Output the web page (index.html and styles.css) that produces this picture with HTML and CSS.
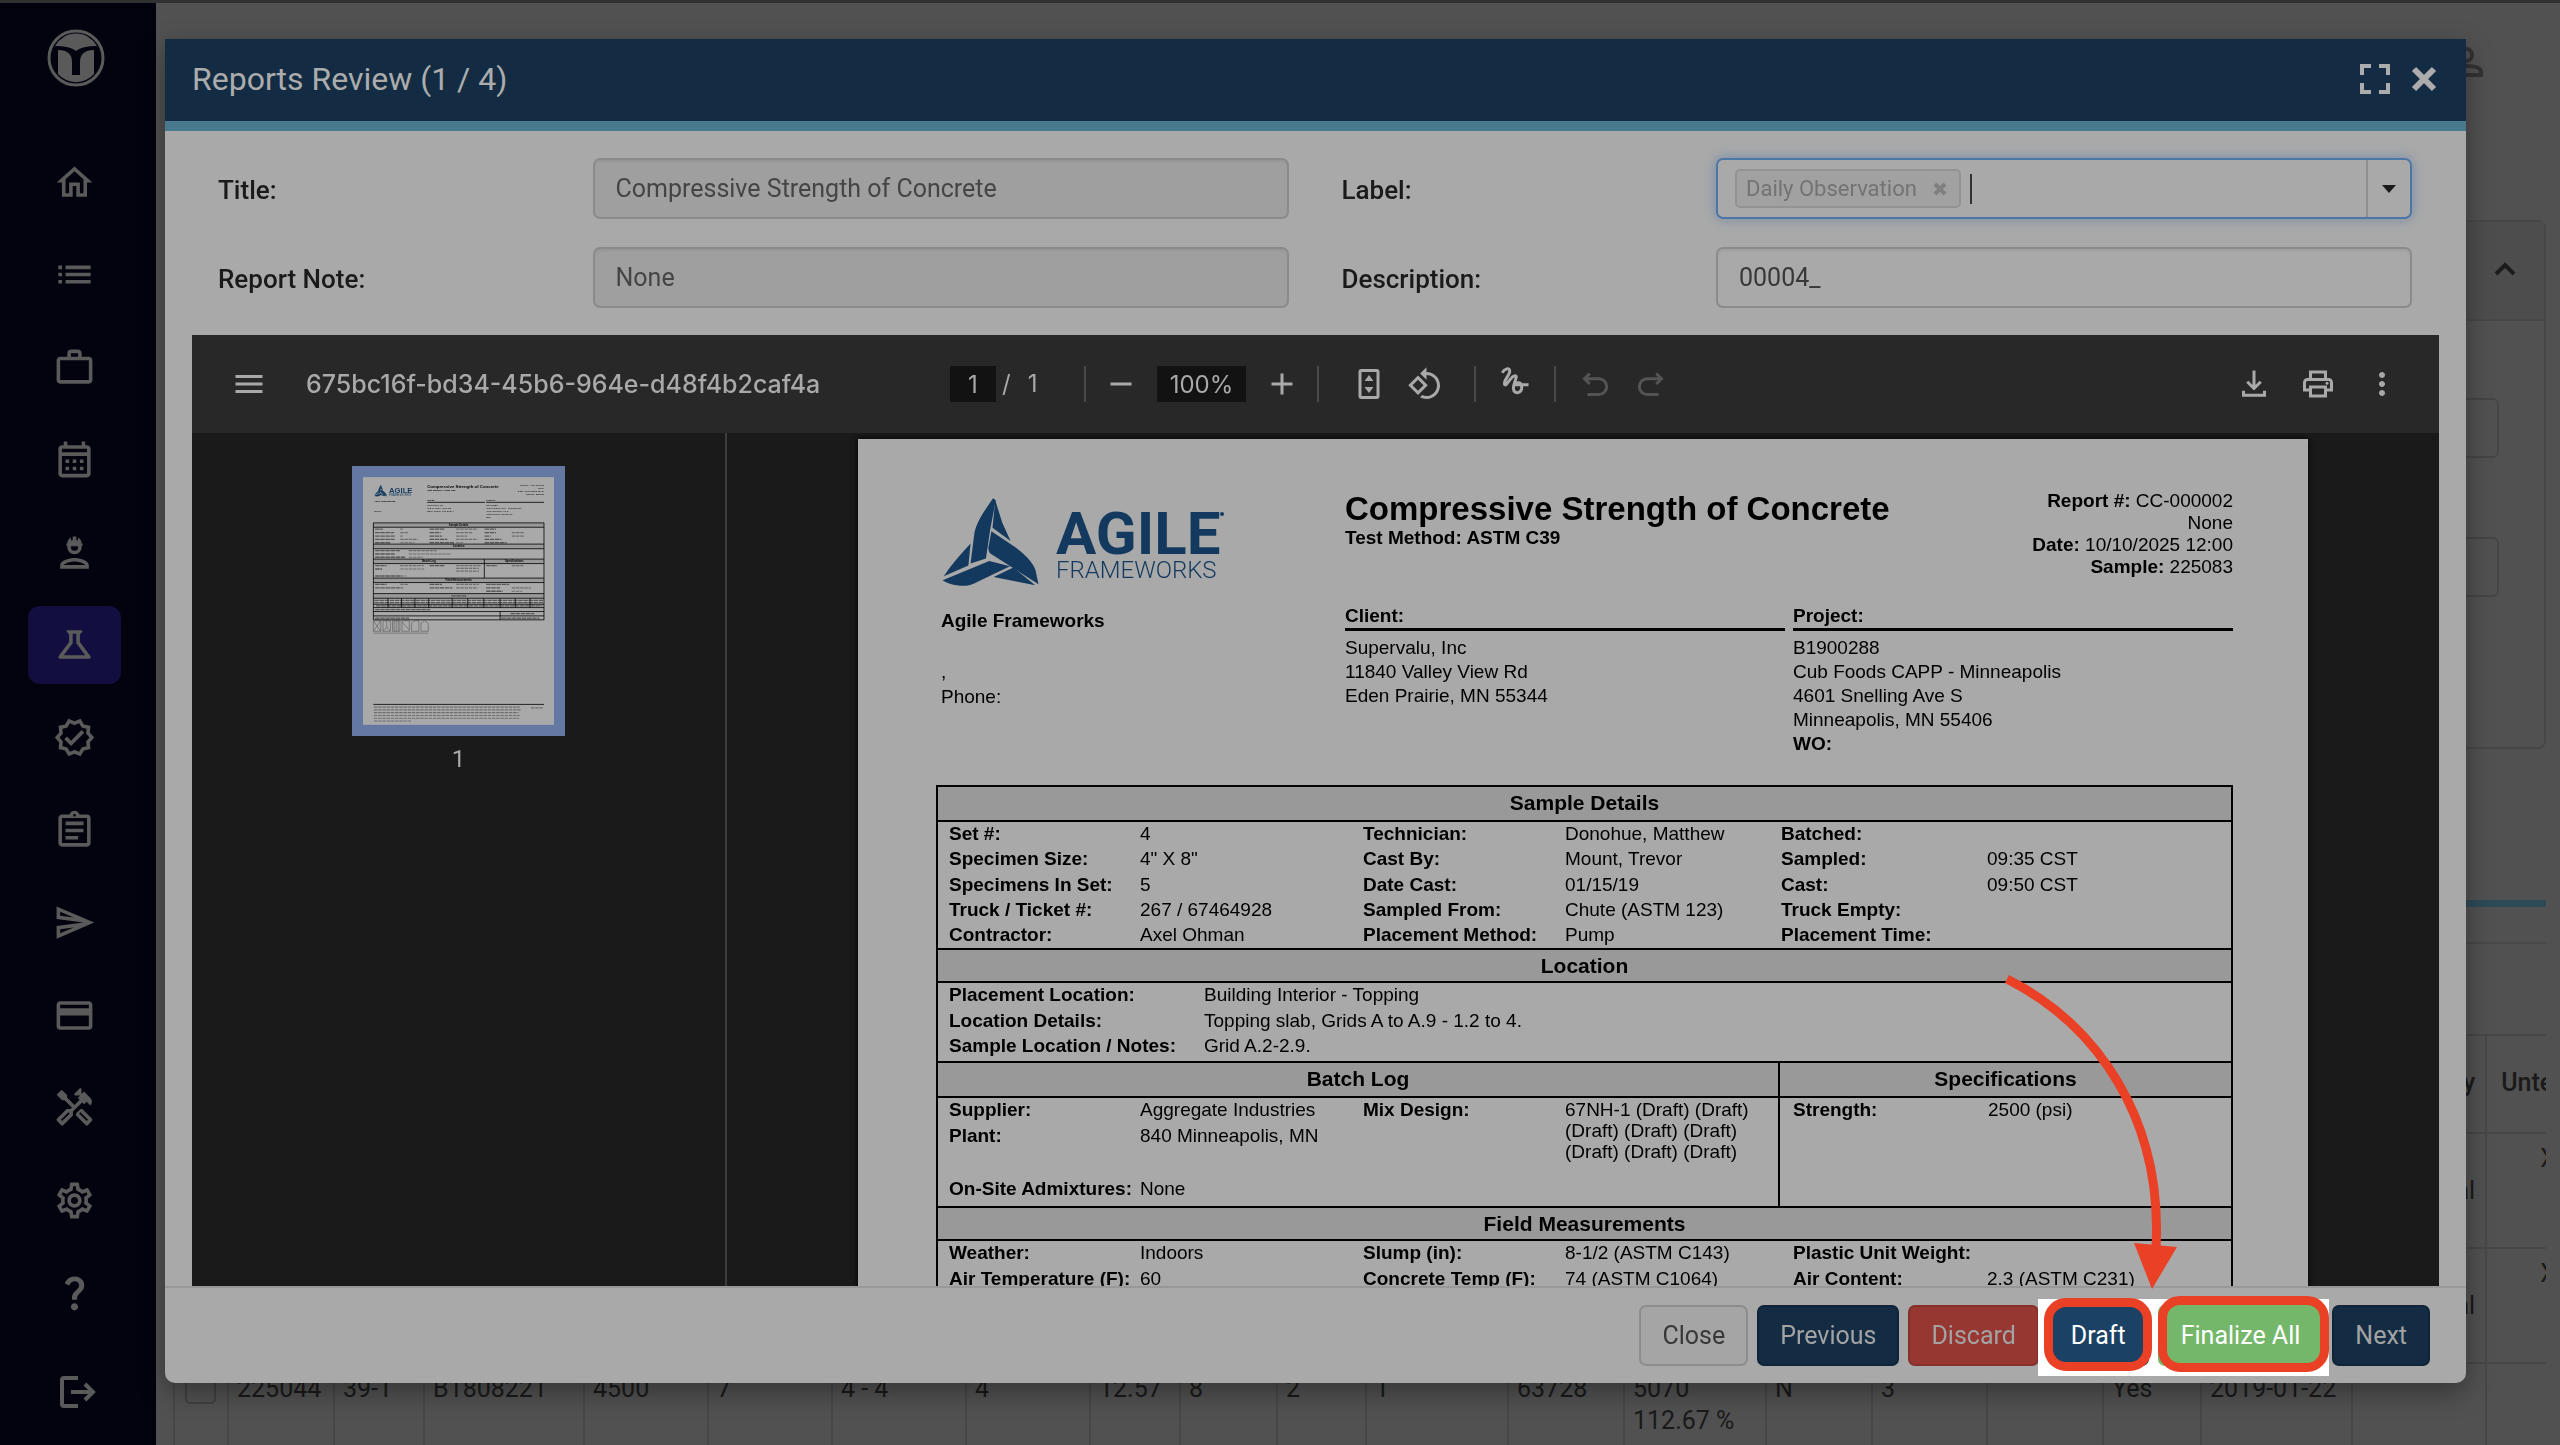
FILE: index.html
```html
<!DOCTYPE html>
<html lang="en">
<head>
<meta charset="utf-8">
<title>Reports Review</title>
<link rel="stylesheet" href="styles.css">
</head>
<body>
<svg class="defs" aria-hidden="true">
  <symbol id="agile-mark" viewBox="0 0 98 90">
    <g transform="scale(0.548 0.333)">
      <path d="M95 4C78 45 62 80 60 120L54 200L82 185L90 95L100 10Z"/>
      <path d="M99 10L112 78L127 132L94 92Z"/>
      <path d="M92 103L135 150Q172 195 174 232L178 262L90 170Q84 160 88 140Z"/>
      <path d="M3 250L88 192L126 208L66 255Q50 270 32 266Q12 262 3 250Z"/>
      <path d="M54 140L50 206L5 238Q20 200 54 140Z"/>
      <path d="M132 212L172 265L96 240Z"/>
    </g>
  </symbol>
</svg>

<div class="app">
  <nav class="sidebar" aria-label="Main">
    <a class="brand" href="#" aria-label="Home page">
      <svg viewBox="0 0 58 58"><circle cx="29" cy="29" r="27" fill="none" stroke="currentColor" stroke-width="3"/><path d="M8 17A24 24 0 0 1 50 17Q35 17 29 22Q23 17 8 17Z"/><path d="M11 21Q25 21 25 33V46H33V33Q33 21 47 21V45A24 24 0 0 1 11 45Z"/></svg>
    </a>
    <div class="nav-items">
      <a href="#" aria-label="Home"><svg viewBox="0 0 24 24"><path d="M12 5.69l5 4.5V18h-2v-6H9v6H7v-7.81l5-4.5M12 3L2 12h3v8h6v-6h2v6h6v-8h3L12 3z"/></svg></a>
      <a href="#" aria-label="List"><svg viewBox="0 0 24 24"><path d="M3 13h2v-2H3v2zm0 4h2v-2H3v2zm0-8h2V7H3v2zm4 4h14v-2H7v2zm0 4h14v-2H7v2zM7 7v2h14V7H7z"/></svg></a>
      <a href="#" aria-label="Projects"><svg viewBox="0 0 24 24"><path d="M14 6V4h-4v2h4zM4 8v11h16V8H4zm16-2c1.11 0 2 .89 2 2v11c0 1.11-.89 2-2 2H4c-1.11 0-2-.89-2-2l.01-11c0-1.11.88-2 1.99-2h4V4c0-1.11.89-2 2-2h4c1.11 0 2 .89 2 2v2h4z"/></svg></a>
      <a href="#" aria-label="Calendar"><svg viewBox="0 0 24 24"><path d="M19 4h-1V2h-2v2H8V2H6v2H5c-1.11 0-1.99.9-1.99 2L3 20c0 1.1.89 2 2 2h14c1.1 0 2-.9 2-2V6c0-1.1-.9-2-2-2zm0 16H5V10h14v10zm0-12H5V6h14v2zM9 14H7v-2h2v2zm4 0h-2v-2h2v2zm4 0h-2v-2h2v2zm-8 4H7v-2h2v2zm4 0h-2v-2h2v2zm4 0h-2v-2h2v2z"/></svg></a>
      <a href="#" aria-label="Crew"><svg viewBox="0 0 24 24"><path d="M12 15c-2.67 0-8 1.34-8 4v2h16v-2c0-2.66-5.33-4-8-4zm-6 4c.2-.7 3.3-2 6-2s5.800 1.300 6 2H6z"/><path d="M7.500 7H8c0-1.500.8-2.700 2-3.400V5.200h1V3h2v2.200h1V3.600c1.200.7 2 1.900 2 3.400h.5v1.200H16v.8a4 4 0 0 1-8 0v-.8h-.5zM10 8.500v.5a2 2 0 0 0 4 0v-.5z" fill-rule="evenodd"/></svg></a>
      <a href="#" class="active" aria-label="Lab"><svg viewBox="0 0 24 24"><path d="M13 11.330L18 18H6l5-6.670V6h2m2.960-2H8.040c-.42 0-.65.48-.39.81L9 6.500v4.170L3.200 18.400c-.49.66-.02 1.600.8 1.600h16c.82 0 1.290-.94.8-1.600L15 10.670V6.500l1.350-1.690c.26-.33.03-.81-.39-.81z"/></svg></a>
      <a href="#" aria-label="Verified"><svg viewBox="0 0 24 24"><path d="M23 11.990l-2.440-2.790.34-3.690-3.610-.82L15.400 1.500 12 2.960 8.600 1.500 6.710 4.690 3.100 5.500l.34 3.700L1 11.990l2.440 2.790-.34 3.700 3.610.82 1.890 3.200 3.400-1.470 3.400 1.460 1.890-3.190 3.610-.82-.34-3.690L23 11.990zm-3.950 1.480l-.56.65.08.85.18 1.950-1.900.43-.84.19-.44.74-.99 1.680-1.780-.77-.8-.34-.79.34-1.780.77-.99-1.670-.44-.74-.84-.19-1.900-.43.18-1.960.08-.85-.56-.65L3.670 12l1.290-1.480.56-.65-.09-.86-.18-1.940 1.900-.43.84-.19.44-.74.99-1.680 1.780.77.8.34.79-.34 1.780-.77.99 1.680.44.74.84.19 1.900.43-.18 1.950-.08.85.56.65 1.290 1.470-1.280 1.480z"/><path d="M10.090 13.750l-2.320-2.330-1.480 1.490 3.800 3.810 7.340-7.360-1.480-1.490z"/></svg></a>
      <a href="#" aria-label="Reports"><svg viewBox="0 0 24 24"><path d="M7 15h7v2H7zm0-4h10v2H7zm0-4h10v2H7zm12-4h-4.180C14.400 1.840 13.300 1 12 1c-1.300 0-2.400.84-2.820 2H5c-1.100 0-2 .9-2 2v14c0 1.100.9 2 2 2h14c1.100 0 2-.9 2-2V5c0-1.100-.9-2-2-2zm-7-.25c.41 0 .75.34.75.75s-.34.75-.75.75-.75-.34-.75-.75.34-.75.75-.75zM19 19H5V5h14v14z"/></svg></a>
      <a href="#" aria-label="Send"><svg viewBox="0 0 24 24"><path d="M4.010 6.030l7.510 3.220-7.520-1 .01-2.220m7.500 8.720L4 17.970v-2.220l7.510-1M2.010 3L2 10l15 2-15 2 .01 7L23 12 2.010 3z"/></svg></a>
      <a href="#" aria-label="Billing"><svg viewBox="0 0 24 24"><path d="M20 4H4c-1.110 0-1.990.89-1.990 2L2 18c0 1.110.89 2 2 2h16c1.110 0 2-.89 2-2V6c0-1.110-.89-2-2-2zm0 14H4v-6h16v6zm0-10H4V6h16v2z"/></svg></a>
      <a href="#" aria-label="Tools"><svg viewBox="0 0 24 24"><path d="M21.670 18.170l-5.300-5.300h-.99l-2.540 2.540v.99l5.300 5.300c.39.39 1.020.39 1.410 0l2.120-2.120c.39-.38.39-1.020 0-1.410zm-2.830 1.420l-4.240-4.240.71-.71 4.240 4.240-.71.71z"/><path d="M17.340 10.190l1.410-1.410 2.120 2.120c1.170-1.170 1.170-3.070 0-4.240l-3.540-3.540-1.410 1.410V1.710L15.220 1l-3.540 3.540.71.71h2.830l-1.410 1.410 1.060 1.060-2.890 2.890-4.130-4.130V5.060L4.830 2.040 2 4.870 5.030 7.900h1.410l4.130 4.130-.85.85H7.600l-5.300 5.300c-.39.39-.39 1.020 0 1.410l2.120 2.120c.39.39 1.020.39 1.410 0l5.300-5.300v-2.120l5.150-5.150 1.060 1.050zm-7.980 5.150l-4.240 4.240-.71-.71 4.240-4.240.71.71z"/></svg></a>
      <a href="#" aria-label="Settings"><svg viewBox="0 0 24 24"><path d="M19.430 12.980c.04-.32.07-.64.07-.98 0-.34-.03-.66-.07-.98l2.110-1.650c.19-.15.24-.42.12-.64l-2-3.460c-.09-.16-.26-.25-.44-.25-.06 0-.12.01-.17.03l-2.490 1c-.52-.4-1.080-.73-1.690-.98l-.38-2.650C14.460 2.180 14.250 2 14 2h-4c-.25 0-.46.18-.49.42l-.38 2.650c-.61.25-1.170.59-1.690.98l-2.490-1c-.06-.02-.12-.03-.18-.03-.17 0-.34.09-.43.25l-2 3.460c-.13.22-.07.49.12.64l2.110 1.650c-.04.32-.07.65-.07.98 0 .33.03.66.07.98l-2.110 1.650c-.19.15-.24.42-.12.64l2 3.460c.09.16.26.25.44.25.06 0 .12-.01.17-.03l2.490-1c.52.4 1.080.73 1.690.98l.38 2.650c.03.24.24.42.49.42h4c.25 0 .46-.18.49-.42l.38-2.650c.61-.25 1.170-.59 1.690-.98l2.490 1c.06.02.12.03.18.03.17 0 .34-.09.43-.25l2-3.460c.12-.22.07-.49-.12-.64l-2.110-1.650zm-1.980-1.710c.04.31.05.52.05.73 0 .21-.02.43-.05.73l-.14 1.130.89.7 1.080.84-.7 1.210-1.270-.51-1.040-.42-.9.68c-.43.32-.84.56-1.250.73l-1.060.43-.16 1.130-.2 1.350h-1.400l-.19-1.350-.16-1.130-1.060-.43c-.43-.18-.83-.41-1.230-.71l-.91-.7-1.060.43-1.270.51-.7-1.210 1.080-.84.89-.7-.14-1.130c-.03-.31-.05-.54-.05-.74s.02-.43.05-.73l.14-1.130-.89-.7-1.080-.84.7-1.210 1.270.51 1.040.42.9-.68c.43-.32.84-.56 1.250-.73l1.060-.43.16-1.130.2-1.350h1.390l.19 1.350.16 1.130 1.060.43c.43.18.83.41 1.230.71l.91.7 1.060-.43 1.270-.51.7 1.210-1.070.85-.89.7.14 1.130zM12 8c-2.210 0-4 1.790-4 4s1.790 4 4 4 4-1.790 4-4-1.790-4-4-4zm0 6c-1.100 0-2-.9-2-2s.9-2 2-2 2 .9 2 2-.9 2-2 2z"/></svg></a>
      <a href="#" aria-label="Help"><svg viewBox="0 0 24 24"><path d="M11.070 12.850c.77-1.390 2.250-2.210 3.110-3.440.91-1.290.4-3.700-2.180-3.700-1.690 0-2.520 1.280-2.870 2.340L6.540 6.960C7.250 4.830 9.180 3 11.990 3c2.350 0 3.960 1.070 4.780 2.410.7 1.150 1.110 3.300.03 4.900-1.200 1.770-2.350 2.310-2.970 3.450-.25.46-.35.76-.35 2.240h-2.890c-.01-.78-.13-2.050.48-3.150zM14 20c0 1.100-.9 2-2 2s-2-.9-2-2 .9-2 2-2 2 .9 2 2z"/></svg></a>
    </div>
    <a class="logout" href="#" aria-label="Log out"><svg viewBox="0 0 36 32" fill="none" stroke="currentColor" stroke-width="4"><path d="M18 2H4Q2 2 2 4V28Q2 30 4 30H18M11 16H33M25 8L33 16L25 24"/></svg></a>
  </nav>

  <main class="page">
    <header class="page-head">
      <a href="#" aria-label="Account"><svg viewBox="0 0 34 30" fill="none" stroke="currentColor" stroke-width="4"><circle cx="17" cy="8" r="6"/><path d="M2 28V25Q2 19 17 19T32 25V28Z"/></svg></a>
    </header>
    <section class="filter-card">
      <div class="filter-head"><button type="button" aria-label="Collapse"><svg viewBox="0 0 22 14" fill="none" stroke="currentColor" stroke-width="4"><path d="M2 12L11 3L20 12"/></svg></button></div>
      <div class="filter-body">
        <input type="text" aria-label="Filter from">
        <input type="text" aria-label="Filter to">
      </div>
    </section>
    <section class="results">
      <div class="results-bar"></div>
      <table>
        <colgroup><col class="c54"><col class="c106"><col class="c90"><col class="c160"><col class="c124"><col class="c124"><col class="c134"><col class="c124"><col class="c90"><col class="c97"><col class="c89"><col class="c142"><col class="c116"><col class="c142"><col class="c106"><col class="c115"><col class="c116"><col class="c98"><col class="c151"><col class="c134"><col class="c124"></colgroup>
        <thead><tr><th colspan="19"></th><th class="end">y</th><th class="untested">Unte</th></tr></thead>
        <tbody>
          <tr><td colspan="19"></td><td class="end"><br>al</td><td class="count">X</td></tr>
          <tr><td colspan="19"></td><td class="end"><br>al</td><td class="count">X</td></tr>
          <tr><td class="tick"><input type="checkbox" aria-label="Select 225044"></td><td>225044</td><td>39-1</td><td>B1808221</td><td>4500</td><td>7</td><td>4 - 4</td><td>4</td><td>12.57</td><td>8</td><td>2</td><td>1</td><td>63728</td><td>5070<br>112.67 %</td><td>N</td><td>3</td><td></td><td>Yes</td><td>2019-01-22</td><td></td><td></td></tr>
        </tbody>
      </table>
    </section>
  </main>
</div>

<div class="overlay">
  <section class="modal" role="dialog" aria-labelledby="modal-title">
    <header class="modal-head">
      <h1 id="modal-title">Reports Review (1 / 4)</h1>
      <button type="button" aria-label="Full screen"><svg width="30" height="30" viewBox="0 0 30 30" fill="none" stroke="currentColor" stroke-width="4"><path d="M2 11V2H11M19 2H28V11M28 19V28H19M11 28H2V19"/></svg></button>
      <button type="button" aria-label="Close dialog"><svg width="26" height="26" viewBox="0 0 26 26" fill="none" stroke="currentColor" stroke-width="6"><path d="M3 3L23 23M23 3L3 23"/></svg></button>
    </header>
    <div class="modal-body">
      <form class="fields">
        <label for="f-title">Title:</label>
        <div class="cell"><input id="f-title" type="text" value="Compressive Strength of Concrete" disabled></div>
        <label for="f-label">Label:</label>
        <div class="cell">
          <div class="combo">
            <span class="tag">Daily Observation <button type="button" aria-label="Remove"><svg width="14" height="14" viewBox="0 0 14 14" fill="none" stroke="currentColor" stroke-width="4"><path d="M2 2L12 12M12 2L2 12"/></svg></button></span>
            <span class="caret"></span>
            <input id="f-label" type="text">
            <button class="combo-toggle" type="button" aria-label="Show options"><svg width="14" height="8" viewBox="0 0 14 8"><path d="M0 0H14L7 8Z"/></svg></button>
          </div>
        </div>
        <label for="f-note">Report Note:</label>
        <div class="cell"><input id="f-note" type="text" value="None" disabled></div>
        <label for="f-desc">Description:</label>
        <div class="cell"><input id="f-desc" type="text" value="00004_"></div>
      </form>

      <div class="viewer">
        <div class="toolbar">
          <div class="tb-left">
            <button type="button" aria-label="Menu"><svg viewBox="0 0 24 24"><path d="M3 18h18v-2H3v2zm0-5h18v-2H3v2zm0-7v2h18V6H3z"/></svg></button>
            <span class="doc-name">675bc16f-bd34-45b6-964e-d48f4b2caf4a</span>
          </div>
          <div class="tb-mid">
            <div class="pager"><input class="page-no" type="text" value="1" aria-label="Page number"><span>/</span><span>1</span></div>
            <i class="sep"></i>
            <div class="zoomer">
              <button type="button" aria-label="Zoom out"><svg viewBox="0 0 24 24"><path d="M19 13H5v-2h14v2z"/></svg></button>
              <input class="zoom-no" type="text" value="100%" aria-label="Zoom">
              <button type="button" aria-label="Zoom in"><svg viewBox="0 0 24 24"><path d="M19 13h-6v6h-2v-6H5v-2h6V5h2v6h6v2z"/></svg></button>
            </div>
            <i class="sep"></i>
            <div class="fit">
              <button type="button" aria-label="Fit to page"><svg viewBox="0 0 24 24"><path d="M17 2H7a2 2 0 0 0-2 2v16a2 2 0 0 0 2 2h10a2 2 0 0 0 2-2V4a2 2 0 0 0-2-2zm0 18H7V4h10v16z"/><path d="M12 6l3 4H9zM12 18l3-4H9z"/></svg></button>
              <button type="button" aria-label="Rotate"><svg viewBox="0 0 24 24"><path d="M7.340 6.410L.86 12.900l6.490 6.480 6.490-6.480-6.500-6.490zM3.690 12.900l3.660-3.660L11 12.900l-3.660 3.660-3.650-3.660zm15.670-6.260C17.610 4.880 15.300 4 13 4V.76L8.760 5 13 9.240V6c1.790 0 3.580.68 4.950 2.050 2.730 2.730 2.730 7.170 0 9.900C16.580 19.320 14.790 20 13 20c-.97 0-1.940-.21-2.840-.61l-1.490 1.490C10.020 21.620 11.510 22 13 22c2.300 0 4.610-.88 6.360-2.640 3.520-3.510 3.520-9.210 0-12.720z"/></svg></button>
            </div>
            <i class="sep"></i>
            <div class="pen"><button type="button" aria-label="Draw"><svg viewBox="0 0 24 24" class="line"><path d="M3.500 6.500C5 4 8.500 2.500 8.500 5.500C8.500 8 4.500 11.500 5 14C5.800 17 9 8.500 12 8.500C14.500 8.500 10.500 13.500 11 17.500C11.500 21 16.500 20.500 16.500 16C16.500 12.500 13 12.500 12.500 14.500H21"/></svg></button></div>
            <i class="sep"></i>
            <div class="history">
              <button type="button" aria-label="Undo" disabled><svg viewBox="0 0 24 24" class="line"><path d="M8.500 5L5 8.500L8.500 12M5.500 8.500H14.500A5 5 0 0 1 14.500 19H7"/></svg></button>
              <button type="button" aria-label="Redo" disabled><svg viewBox="0 0 24 24" class="line"><path d="M15.500 5L19 8.500L15.500 12M18.500 8.500H9.500A5 5 0 0 0 9.500 19H17"/></svg></button>
            </div>
          </div>
          <div class="tb-right">
            <button type="button" aria-label="Download"><svg viewBox="0 0 24 24" class="line"><path d="M12 3V15M7.500 10.500L12 15L16.500 10.500M5 16.500V19.500H19V16.500"/></svg></button>
            <button type="button" aria-label="Print"><svg viewBox="0 0 24 24"><path d="M19 8h-1V3H6v5H5c-1.660 0-3 1.340-3 3v6h4v4h12v-4h4v-6c0-1.660-1.340-3-3-3zM8 5h8v3H8V5zm8 12v2H8v-4h8v2zm2-2v-2H6v2H4v-4c0-.55.45-1 1-1h14c.55 0 1 .45 1 1v4h-2z"/><circle cx="18" cy="11.500" r="1"/></svg></button>
            <button type="button" aria-label="More"><svg viewBox="0 0 24 24"><path d="M12 8c1.100 0 2-.9 2-2s-.9-2-2-2-2 .9-2 2 .9 2 2 2zm0 2c-1.100 0-2 .9-2 2s.9 2 2 2 2-.9 2-2-.9-2-2-2zm0 6c-1.100 0-2 .9-2 2s.9 2 2 2 2-.9 2-2-.9-2-2-2z"/></svg></button>
          </div>
        </div>

        <div class="panes">
          <aside class="thumbs">
            <a href="#" class="thumb" aria-label="Page 1">
              <svg viewBox="0 0 1450 1880">
                <rect width="1450" height="1880" fill="#a9a9a9"/>
                <use href="#agile-mark" x="84" y="58" width="98" height="90" fill="#133a5e"/>
                <text x="198" y="118" class="t-logo">AGILE</text>
                <text x="198" y="140" class="t-logo-sub">FRAMEWORKS</text>
                <text x="487" y="84" class="t-title">Compressive Strength of Concrete</text>
                <g class="t-bold">
                  <text x="487" y="106">Test Method: ASTM C39</text>
                  <text x="83" y="188">Agile Frameworks</text>
                  <text x="487" y="183">Client:</text><text x="935" y="183">Project:</text><text x="935" y="310">WO:</text>
                </g>
                <g class="t-reg">
                  <text x="83" y="264">Phone:</text>
                  <text x="487" y="216">Supervalu, Inc</text><text x="487" y="239">11840 Valley View Rd</text><text x="487" y="263">Eden Prairie, MN 55344</text>
                  <text x="935" y="216">B1900288</text><text x="935" y="239">Cub Foods CAPP - Minneapolis</text><text x="935" y="263">4601 Snelling Ave S</text><text x="935" y="286">Minneapolis, MN 55406</text>
                </g>
                <g class="t-reg t-end">
                  <text x="1374" y="69">Report #: CC-000002</text><text x="1374" y="91">None</text><text x="1374" y="113">Date: 10/10/2025 12:00</text><text x="1374" y="136">Sample: 225083</text>
                </g>
                <path d="M487 191H926M935 191H1374" class="rule"/>
                <g fill="#999"><path d="M79 347H1374V380H79zM79 508H1374V543H79zM79 622H1374V656H79zM79 766H1374V800H79zM79 884H1374V919H79z"/></g>
                <g class="rule"><path d="M79 347H1374V1083H79ZM79 380H1374M79 508H1374M79 543H1374M79 622H1374M79 656H1374M79 766H1374M79 800H1374M79 884H1374M79 919H1374M79 965H1374M79 990H1374M79 1020H1374M79 1053H1374M921 622V766M1041 1020V1083M190 919V990M292 919V990M394 919V990M499 919V990M677 919V990M795 919V990M917 919V990M1041 919V990M1156 919V990M1268 919V990M79 1725H1374"/></g>
                <g class="t-head">
                  <text x="726" y="371">Sample Details</text><text x="726" y="533">Location</text><text x="500" y="647">Batch Log</text><text x="1148" y="647">Specifications</text><text x="726" y="791">Field Measurements</text>
                </g>
                <g class="ink-b"><path d="M92 395H150M92 421H236M92 447H240M92 472H240M92 498H210M505 395H620M505 421H590M505 447H600M505 472H640M505 498H690M923 395H1010M923 421H1010M923 447H970M923 472H1050M923 498H1090M92 558H280M92 583H240M92 608H320M92 671H180M92 697H145M92 750H290M505 671H620M935 671H1020M92 814H180M92 840H280M505 814H600M505 840H680M935 814H1110M935 840H1040M935 866H1060M670 901H790M86 935H1366M86 952H1366M100 977H1360M92 1006H510M1120 1036H1300M92 1070H350M1050 1070H1340"/></g>
                <g class="ink"><path d="M283 395H300M283 421H340M283 447H300M283 472H415M283 498H390M707 395H870M707 421H830M707 447H790M707 472H870M707 498H760M1130 421H1220M1130 447H1220M347 558H560M347 583H670M347 608H455M283 671H460M283 697H465M285 750H330M707 671H893M707 692H880M707 713H880M1130 671H1218M283 814H345M283 840H305M707 814H880M707 840H870M1130 840H1275M1130 866H1210M83 1746H1190M83 1767H1196M83 1788H1180M83 1809H1190M83 1830H1185M83 1851H365M1275 1752H1370"/></g>
                <path class="hair" d="M79 1090H135V1170H79zM152 1090H208V1170H152zM224 1090H280V1170H224zM296 1090H352V1170H296zM368 1110L388 1090H424V1170H368zM440 1110L468 1090L496 1110V1170H440zM79 1090L135 1170M135 1090L79 1170M152 1170L180 1140L208 1170M180 1140V1090M236 1090V1170M252 1090V1170M268 1090V1170M296 1100L352 1160M79 1184H496"/>
              </svg>
            </a>
            <span>1</span>
          </aside>

          <div class="canvas">
            <article class="sheet">
              <header class="sheet-head">
                <div class="issuer">
                  <svg class="agile" viewBox="0 0 290 90" role="img" aria-label="Agile Frameworks">
                    <use href="#agile-mark" width="98" height="90"/>
                    <text x="115" y="57" class="agile-name">AGILE</text>
                    <text x="115" y="81" class="agile-sub">FRAMEWORKS</text>
                    <circle cx="281" cy="17" r="2"/>
                  </svg>
                  <strong>Agile Frameworks</strong>
                  <p>,<br>Phone:</p>
                </div>
                <div class="sheet-title">
                  <h2>Compressive Strength of Concrete</h2>
                  <strong>Test Method: ASTM C39</strong>
                </div>
                <p class="report-ref"><b>Report #:</b> CC-000002<br>None<br><b>Date:</b> 10/10/2025 12:00<br><b>Sample:</b> 225083</p>
                <div class="party client"><h3>Client:</h3><p>Supervalu, Inc<br>11840 Valley View Rd<br>Eden Prairie, MN 55344</p></div>
                <div class="party project"><h3>Project:</h3><p>B1900288<br>Cub Foods CAPP - Minneapolis<br>4601 Snelling Ave S<br>Minneapolis, MN 55406<br><b>WO:</b></p></div>
              </header>

              <div class="record">
                <h3>Sample Details</h3>
                <dl class="six sample">
                  <dt>Set #:</dt><dd>4</dd><dt>Technician:</dt><dd>Donohue, Matthew</dd><dt>Batched:</dt><dd></dd>
                  <dt>Specimen Size:</dt><dd>4" X 8"</dd><dt>Cast By:</dt><dd>Mount, Trevor</dd><dt>Sampled:</dt><dd>09:35 CST</dd>
                  <dt>Specimens In Set:</dt><dd>5</dd><dt>Date Cast:</dt><dd>01/15/19</dd><dt>Cast:</dt><dd>09:50 CST</dd>
                  <dt>Truck / Ticket #:</dt><dd>267 / 67464928</dd><dt>Sampled From:</dt><dd>Chute (ASTM 123)</dd><dt>Truck Empty:</dt><dd></dd>
                  <dt>Contractor:</dt><dd>Axel Ohman</dd><dt>Placement Method:</dt><dd>Pump</dd><dt>Placement Time:</dt><dd></dd>
                </dl>
                <h3>Location</h3>
                <dl class="place">
                  <dt>Placement Location:</dt><dd>Building Interior - Topping</dd>
                  <dt>Location Details:</dt><dd>Topping slab, Grids A to A.9 - 1.2 to 4.</dd>
                  <dt>Sample Location / Notes:</dt><dd>Grid A.2-2.9.</dd>
                </dl>
                <div class="split">
                  <div class="batch">
                    <h3>Batch Log</h3>
                    <dl>
                      <dt>Supplier:</dt><dd>Aggregate Industries</dd><dt>Mix Design:</dt><dd class="mix">67NH-1 (Draft) (Draft)<br>(Draft) (Draft) (Draft)<br>(Draft) (Draft) (Draft)</dd>
                      <dt>Plant:</dt><dd>840 Minneapolis, MN</dd>
                      <dt class="onsite">On-Site Admixtures:</dt><dd class="onsite">None</dd>
                    </dl>
                  </div>
                  <div class="specs">
                    <h3>Specifications</h3>
                    <dl><dt>Strength:</dt><dd>2500 (psi)</dd></dl>
                  </div>
                </div>
                <h3>Field Measurements</h3>
                <dl class="six field">
                  <dt>Weather:</dt><dd>Indoors</dd><dt>Slump (in):</dt><dd>8-1/2 (ASTM C143)</dd><dt>Plastic Unit Weight:</dt><dd></dd>
                  <dt>Air Temperature (F):</dt><dd>60</dd><dt>Concrete Temp (F):</dt><dd>74 (ASTM C1064)</dd><dt>Air Content:</dt><dd>2.3 (ASTM C231)</dd>
                </dl>
              </div>
            </article>
          </div>
        </div>
      </div>
    </div>

    <footer class="modal-foot">
      <button type="button" class="btn light">Close</button>
      <button type="button" class="btn navy">Previous</button>
      <button type="button" class="btn red">Discard</button>
      <div class="spotlight">
        <button type="button" class="btn draft">Draft</button>
        <button type="button" class="btn final">Finalize All</button>
        <svg class="arrow" width="200" height="325" viewBox="2000 970 200 325"><path d="M2009 979C2100 1025 2165 1120 2158 1248" fill="none" stroke="#ea4025" stroke-width="9"/><path d="M2136 1243L2179 1247L2154 1289Z" fill="#ea4025"/></svg>
      </div>
      <button type="button" class="btn navy">Next</button>
    </footer>
  </section>
</div>
</body>
</html>
```
FILE: styles.css
```css
* { box-sizing: border-box; }

body {
  margin: 0;
  background: #515151;
  font: 25px/32px Roboto, sans-serif;
  color: #1a1a1a;
}

button { margin: 0; padding: 0; border: 0; background: none; color: inherit; font: inherit; }
input { font: inherit; }
h1, h2, h3, p, dl, dd { margin: 0; }
svg { display: block; fill: currentColor; }
svg[fill="none"] { fill: none; }
.defs { position: absolute; width: 0; height: 0; }

/* App shell behind the dialog */
.app { display: flex; height: 100vh; overflow: hidden; border-top: 3px solid #303030; }

.sidebar {
  display: flex;
  flex-direction: column;
  align-items: center;
  flex: none;
  width: 156px;
  padding: 26px 7px 37px 0;
  background: #03030f;
  color: #5a5a5a;
}
.brand { color: inherit; padding-left: 2px; }
.brand svg { width: 58px; height: 58px; }
.nav-items {
  display: flex;
  flex: 1;
  flex-direction: column;
  justify-content: space-between;
  margin: 56px 0 44px;
}
.nav-items a {
  display: grid;
  place-items: center;
  width: 93px;
  height: 78px;
  border-radius: 12px;
  color: inherit;
}
.nav-items a.active { background: #120f40; }
.nav-items svg { width: 43px; height: 43px; }
.logout { padding-left: 6px; color: inherit; }
.logout svg { width: 36px; height: 32px; }

.page { flex: 1; min-width: 0; padding: 0 14px 0 17px; }
.page-head { display: flex; justify-content: flex-end; height: 217px; padding: 44px 63px 0 0; color: #333; }
.page-head a { color: inherit; }
.page-head svg { width: 34px; height: 30px; }
.filter-card { border: 2px solid #474747; border-radius: 8px; height: 529px; }
.filter-head { display: flex; justify-content: flex-end; align-items: center; height: 99px; padding: 0 28px 4px 0; background: #4d4d4d; border-bottom: 2px solid #474747; }
.filter-head svg { width: 22px; height: 14px; color: #1c1c1c; }
.filter-body { display: flex; flex-direction: column; align-items: flex-end; gap: 79px; padding: 77px 45px 0; }
.filter-body input { width: 50%; height: 60px; border: 2px solid #454545; border-radius: 6px; background: none; }

.results { margin-top: 151px; overflow: hidden; }
.results-bar { height: 134px; border-top: 7px solid #2d4a57; background: linear-gradient(#484848, #484848) 0 35px / 100% 2px no-repeat; }
.results table { width: 2436px; table-layout: fixed; border-collapse: collapse; }
.results th, .results td { border: 2px solid #474747; padding: 9px 8px 0; text-align: left; vertical-align: top; font-weight: 400; }
.results th { height: 98px; padding-top: 31px; font-weight: 500; }
.results tr { height: 115px; }
.results thead tr { height: 98px; }
.results .end { text-align: right; padding-right: 10px; }
.results .untested { padding-left: 14px; }
.results .count { padding-left: 53px; }
.results .tick { padding: 9px 10px 0; }
.tick input { appearance: none; display: block; width: 31px; height: 31px; margin: 0; border: 2px solid #404040; border-radius: 5px; }
.c54 { width: 54px; } .c106 { width: 106px; } .c90 { width: 90px; } .c160 { width: 160px; }
.c124 { width: 124px; } .c134 { width: 134px; } .c97 { width: 97px; } .c89 { width: 89px; }
.c142 { width: 142px; } .c116 { width: 116px; } .c115 { width: 115px; } .c98 { width: 98px; } .c151 { width: 151px; }

/* Dialog */
.overlay { position: fixed; inset: 0; display: flex; padding: 39px 94px 62px 165px; }
.modal {
  display: flex;
  flex: 1;
  flex-direction: column;
  min-width: 0;
  background: #a9a9a9;
  border-radius: 0 0 10px 10px;
  box-shadow: 0 9px 27px rgba(0, 0, 0, .35);
}
.modal-head {
  display: flex;
  align-items: center;
  gap: 21px;
  height: 92px;
  padding: 0 29px 3px 27px;
  background: #132c43;
  border-bottom: 10px solid #48798c;
  color: #acacac;
}
.modal-head h1 { flex: 1; font-size: 32px; line-height: 40px; font-weight: 400; }
.modal-body { display: flex; flex: 1; flex-direction: column; gap: 27px; min-height: 0; padding: 27px 27px 0; }

.fields { display: grid; grid-template-columns: 2fr 4fr 2fr 4fr; row-gap: 28px; }
.fields label { padding: 16px 26px 0; font-weight: 500; font-size: 26px; line-height: 32px; }
.cell { padding: 0 27px 0 26px; }
.cell > input, .combo { width: 100%; height: 61px; border: 2px solid #8b8b8b; border-radius: 7px; }
.cell > input { display: block; padding: 0 21px; background: #a9a9a9; color: #383838; box-shadow: inset 0 2px 2px rgba(0, 0, 0, .06); }
.cell > input:disabled { background: #9f9f9f; color: #454545; }
.combo { display: flex; align-items: center; padding-left: 17px; border-color: #4c76a6; box-shadow: 0 0 12px rgba(76, 118, 166, .6); }
.combo input { flex: 1; min-width: 0; border: 0; background: none; outline: 0; }
.tag { display: flex; align-items: center; justify-content: space-between; width: 226px; height: 39px; padding: 0 12px 0 9px; border: 2px solid #939393; border-radius: 5px; background: #a1a1a1; color: #737373; font-size: 22px; line-height: 26px; }
.tag button { color: #7f7f7f; }
.caret { width: 2px; height: 30px; margin-left: 9px; background: #333; }
.combo-toggle { display: grid; place-items: center; align-self: stretch; width: 44px; border-left: 2px solid #8f8f8f; }

/* PDF viewer */
.viewer { display: flex; flex: 1; flex-direction: column; min-height: 0; overflow: hidden; background: #1a1a1a; color: #a9a9a9; }
.toolbar { display: flex; align-items: center; flex: none; height: 98px; background: #282828; font: 24px/30px Inter, sans-serif; }
.toolbar svg { width: 36px; height: 36px; }
.toolbar svg.line { fill: none; stroke: currentColor; stroke-width: 2; }
.tb-left, .tb-right { display: flex; align-items: center; flex: 1; }
.tb-left { gap: 39px; padding-left: 39px; }
.doc-name { font-size: 25px; font-weight: 500; white-space: nowrap; }
.tb-right { justify-content: flex-end; gap: 28px; padding-right: 39px; }
.tb-mid { display: flex; align-items: center; width: 731px; }
.tb-mid input { height: 36px; padding: 0; border: 0; background: #121212; color: #a9a9a9; text-align: center; }
.page-no { width: 46px; }
.zoom-no { width: 89px; }
.pager { display: flex; align-items: center; flex: 1; }
.pager span { margin-left: 6px; }
.pager span:last-child { margin-left: 17px; }
.sep { flex: none; width: 2px; height: 36px; background: #4a4a4a; }
.zoomer { display: flex; gap: 18px; padding: 0 17px; }
.fit { display: flex; gap: 20px; padding: 0 31px 0 32px; }
.pen { padding: 0 21px; }
.history { display: flex; gap: 20px; padding: 0 12px 0 21px; color: #545454; }

.panes { display: flex; flex: 1; min-height: 0; }
.thumbs { display: flex; flex: none; flex-direction: column; align-items: center; width: 535px; padding-top: 33px; border-right: 2px solid #3c3c3c; }
.thumb { width: 213px; height: 270px; padding: 11px; background: #6478a4; color: #000; }
.thumb svg { width: 191px; height: 248px; }
.thumbs span { margin-top: 7px; font-size: 24px; line-height: 32px; }
.thumb text { font-family: "Liberation Sans", sans-serif; }
.t-title { font-size: 33px; font-weight: 700; }
.t-bold { font-size: 19px; font-weight: 700; }
.t-reg { font-size: 19px; }
.t-end { text-anchor: end; }
.t-head { font-size: 21px; font-weight: 700; text-anchor: middle; }
.t-logo { font-size: 58px; font-weight: 700; fill: #133a5e; }
.t-logo-sub { font-size: 23px; fill: #133a5e; }
.rule { fill: none; stroke: #000; stroke-width: 6; }
.ink-b { fill: none; stroke: #222; stroke-width: 10; stroke-dasharray: 34 5; opacity: .6; }
.ink { fill: none; stroke: #333; stroke-width: 9; stroke-dasharray: 26 6; opacity: .5; }
.hair { fill: none; stroke: #333; stroke-width: 3; }

.canvas { display: flex; flex: 1; justify-content: center; padding-top: 6px; overflow: hidden; }
.sheet {
  flex: none;
  width: 1450px;
  height: 1880px;
  padding: 48px 75px 0 78px;
  background: #a9a9a9;
  color: #000;
  font: 19px/22px "Liberation Sans", Arial, sans-serif;
  box-shadow: 0 0 6px #000;
}
.sheet-head { display: grid; grid-template-columns: 404px 448px 1fr; grid-template-rows: 118px 180px; padding-left: 5px; }
.issuer { grid-row: span 2; color: #133a5e; }
.issuer strong, .issuer p { display: block; color: #000; }
.agile { width: 290px; height: 90px; margin: 10px 0 23px; }
.agile-name { font: 700 60px Roboto, sans-serif; }
.agile-sub { font: 300 24px Roboto, sans-serif; }
.issuer p { margin-top: 27px; line-height: 25px; }
.sheet-title { white-space: nowrap; }
.sheet-title h2 { margin-top: 4px; font-size: 33px; line-height: 36px; }
.sheet-title strong { display: block; }
.report-ref { text-align: right; padding-top: 3px; }
.party { line-height: 24px; }
.party h3 { height: 26px; margin-bottom: 5px; border-bottom: 3px solid #000; font-size: 19px; line-height: 22px; }
.client h3 { margin-right: 8px; }

.record { border: 2px solid #000; }
.record h3 { height: 35px; border-bottom: 2px solid #000; background: #999; font-size: 21px; line-height: 32px; text-align: center; }
.record dl { display: grid; padding: 1px 0 0 11px; }
.record dl + h3, .split, .split + h3 { border-top: 2px solid #000; }
.record dt { font-weight: 700; white-space: nowrap; }
.record dd { white-space: nowrap; }
.record .six { grid-template-columns: 191px 223px 202px 216px 206px 1fr; align-content: space-between; }
.record .sample { height: 126px; padding-bottom: 2px; }
.record .place { grid-template-columns: 255px 1fr; height: 78px; align-content: space-between; padding-bottom: 4px; }
.split { display: grid; grid-template-columns: 842px 1fr; }
.batch { border-right: 2px solid #000; }
.batch dl { grid-template-columns: 191px 223px 202px 1fr; grid-template-rows: 26px 53px 22px; height: 108px; }
.mix { grid-row: span 2; line-height: 21px; }
.onsite { grid-row: 3; }
.record .specs dl { grid-template-columns: 195px 1fr; padding-left: 13px; }
.record .field { grid-template-columns: 191px 223px 202px 228px 194px 1fr; row-gap: 4px; }

/* Footer */
.modal-foot { display: flex; align-items: center; justify-content: flex-end; gap: 9px; flex: none; height: 97px; padding: 0 36px; border-top: 2px solid #989898; }
.btn { position: relative; height: 61px; padding: 0 21px; border: 2px solid transparent; border-radius: 7px; color: #a3a3a3; white-space: nowrap; }
.light { background: #a5a5a5; border-color: #8d8d8d; color: #383838; }
.navy { background: #132c43; border-color: #0f2438; }
.red { background: #963732; border-color: #86302c; }
.draft { background: #1b4165; color: #fff; }
.final { background: #74b76b; color: #fff; }
.spotlight { position: relative; display: flex; gap: 9px; }
.spotlight::before { content: ""; position: absolute; inset: -6px -6px -10px -10px; background: #fff; }
.draft::after, .final::after { content: ""; position: absolute; inset: -9px -5px -7px -6px; border: 9px solid #ea4025; border-radius: 22px; }
.final::after { inset: -11px -8px -8px -2px; }
.arrow { position: absolute; right: 125px; bottom: 71px; }
```
